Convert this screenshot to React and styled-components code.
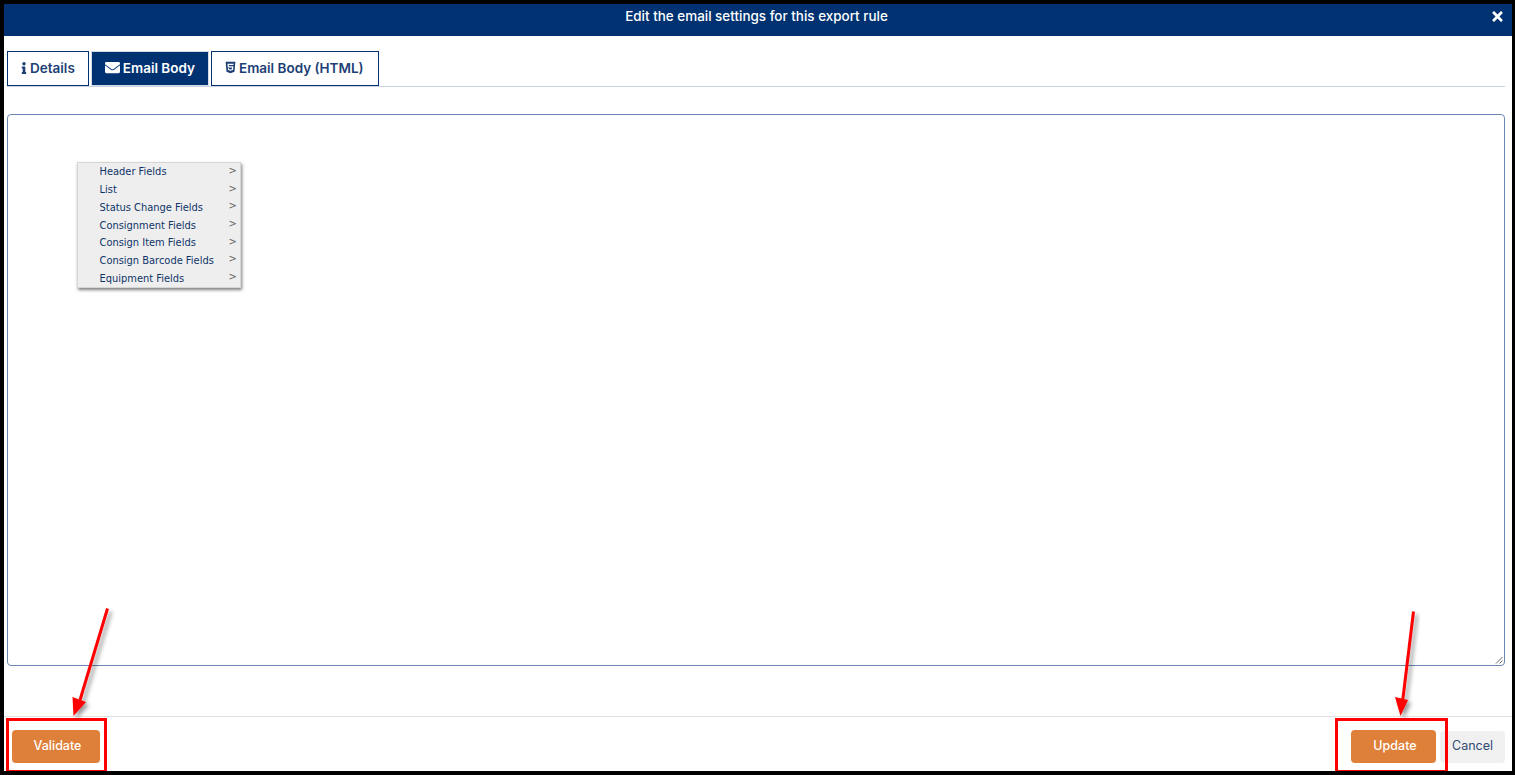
import React from "react";
import styled, { createGlobalStyle } from "styled-components";
import { FaInfo, FaEnvelope, FaHtml5, FaTimes } from "react-icons/fa";

const Global = createGlobalStyle`
  html, body { margin: 0; padding: 0; background: #000; }
  * { box-sizing: border-box; }
`;

const Frame = styled.div`
  position: relative;
  width: 1515px;
  height: 775px;
  border-style: solid;
  border-color: #000;
  border-width: 4px 3px 4px 4px;
  background: #fff;
  display: flex;
  flex-direction: column;
  font-family: Inter, "Liberation Sans", sans-serif;
  overflow: hidden;
`;

const Header = styled.header`
  position: relative;
  flex: none;
  height: 32px;
  background: #003272;
  color: #fff;
  display: flex;
  align-items: center;
  justify-content: center;
  font-size: 13.45px;
  font-weight: 500;
  padding: 0 3px 8px 0;
`;

const Close = styled.span`
  position: absolute;
  right: 7px;
  top: 5px;
  display: flex;
  font-size: 15px;
  color: #fff;
`;

const Body = styled.main`
  flex: 1;
  display: flex;
  flex-direction: column;
  padding: 15px 7px 0 3px;
`;

const TabBar = styled.nav`
  flex: none;
  display: flex;
  gap: 2px;
  height: 36px;
  border-bottom: 1px solid #c9d3e3;
`;

const Tab = styled.div`
  height: 35px;
  display: flex;
  align-items: center;
  gap: 3px;
  padding: 0 ${(p) => p.$padR}px 2px 13px;
  font-size: 13.5px;
  font-weight: 600;
  border: 1px solid #003272;
  border-color: ${(p) => (p.$active ? "#d5dbe5" : "#003272")};
  background: ${(p) => (p.$active ? "#003272" : "#fff")};
  color: ${(p) => (p.$active ? "#fff" : "#1d3f75")};
  svg {
    flex: none;
    width: ${(p) => p.$iconW}px;
    height: ${(p) => p.$iconH}px;
  }
`;

const Editor = styled.section`
  position: relative;
  flex: none;
  height: 552px;
  margin-top: 27px;
  border: 1px solid #6a87b3;
  border-radius: 4px;
`;

const Grip = styled.svg`
  position: absolute;
  right: 1px;
  bottom: 1px;
  width: 8px;
  height: 8px;
`;

const Menu = styled.ul`
  position: absolute;
  left: 69px;
  top: 47px;
  width: 164px;
  height: 126px;
  margin: 0;
  padding: 0;
  list-style: none;
  background: #eee;
  border: 1px solid #d6d6d6;
  box-shadow: 1px 2px 3px rgba(0, 0, 0, 0.5);
  display: flex;
  flex-direction: column;
`;

const MenuRow = styled.li`
  flex: 1;
  display: flex;
  align-items: center;
  justify-content: space-between;
  padding: 0 3px 0 21.5px;
  font-family: "DejaVu Sans", Verdana, sans-serif;
  font-size: 9.9px;
  color: #0f3468;
`;

const Chevron = styled.span`
  color: #666;
  font-size: 10px;
  margin-top: -3px;
`;

const Footer = styled.footer`
  flex: none;
  margin: 50px -7px 0 -3px;
  height: 55px;
  border-top: 1px solid #e0e0e0;
  padding: 13px 7px 0 8px;
  display: flex;
  align-items: flex-start;
  justify-content: space-between;
`;

const Actions = styled.div`
  display: flex;
  gap: 4px;
`;

const OrangeButton = styled.button`
  width: ${(p) => p.$w}px;
  height: 33px;
  border: none;
  border-radius: 4px;
  background: #df803a;
  color: #fff;
  font-family: inherit;
  font-size: 12.5px;
  font-weight: 500;
  padding: 0 0 3px 3px;
`;

const GhostButton = styled.button`
  width: 65px;
  height: 32px;
  margin-top: 1px;
  border: none;
  border-radius: 4px;
  background: #f0f0f0;
  color: #2f4a74;
  font-family: inherit;
  font-size: 12.5px;
  padding: 0 0 3px;
`;

const Annotations = styled.svg`
  position: absolute;
  left: -4px;
  top: -4px;
  width: 1515px;
  height: 775px;
  pointer-events: none;
`;

const menuItems = [
  "Header Fields",
  "List",
  "Status Change Fields",
  "Consignment Fields",
  "Consign Item Fields",
  "Consign Barcode Fields",
  "Equipment Fields",
];

export default function App() {
  return (
    <>
      <Global />
      <Frame>
        <Header>
          Edit the email settings for this export rule
          <Close><FaTimes /></Close>
        </Header>
        <Body>
          <TabBar>
            <Tab $padR={13} $iconW={6} $iconH={12}><FaInfo />Details</Tab>
            <Tab $padR={13} $active $iconW={15} $iconH={15}><FaEnvelope />Email Body</Tab>
            <Tab $padR={14} $iconW={11} $iconH={13}><FaHtml5 />Email Body (HTML)</Tab>
          </TabBar>
          <Editor>
            <Menu>
              {menuItems.map((item) => (
                <MenuRow key={item}>
                  {item}
                  <Chevron>&gt;</Chevron>
                </MenuRow>
              ))}
            </Menu>
            <Grip viewBox="0 0 8 8">
              <path d="M7.5 1 L1 7.5 M7.5 4.5 L4.5 7.5" stroke="#666" strokeWidth="1" fill="none" />
            </Grip>
          </Editor>
          <Footer>
            <OrangeButton $w={88}>Validate</OrangeButton>
            <Actions>
              <OrangeButton $w={85}>Update</OrangeButton>
              <GhostButton>Cancel</GhostButton>
            </Actions>
          </Footer>
        </Body>
        <Annotations viewBox="0 0 1515 775">
          <defs>
            <filter id="sh" x="-30%" y="-10%" width="160%" height="120%">
              <feDropShadow dx="3" dy="3" stdDeviation="2" floodColor="#000" floodOpacity="0.4" />
            </filter>
          </defs>
          <rect x="7.5" y="719.5" width="98" height="52" fill="none" stroke="#f00" strokeWidth="3" />
          <rect x="1336.5" y="719.5" width="110" height="52" fill="none" stroke="#f00" strokeWidth="3" />
          <g filter="url(#sh)">
            <path d="M107.5 608.5 L80 700" stroke="#f00" strokeWidth="3" fill="none" />
            <path d="M73.5 716 L72.5 697 L86 702 Z" fill="#f00" />
          </g>
          <g filter="url(#sh)">
            <path d="M1413.5 611.5 L1402.5 702" stroke="#f00" strokeWidth="3" fill="none" />
            <path d="M1400.5 716 L1395 697 L1408 700 Z" fill="#f00" />
          </g>
        </Annotations>
      </Frame>
    </>
  );
}
